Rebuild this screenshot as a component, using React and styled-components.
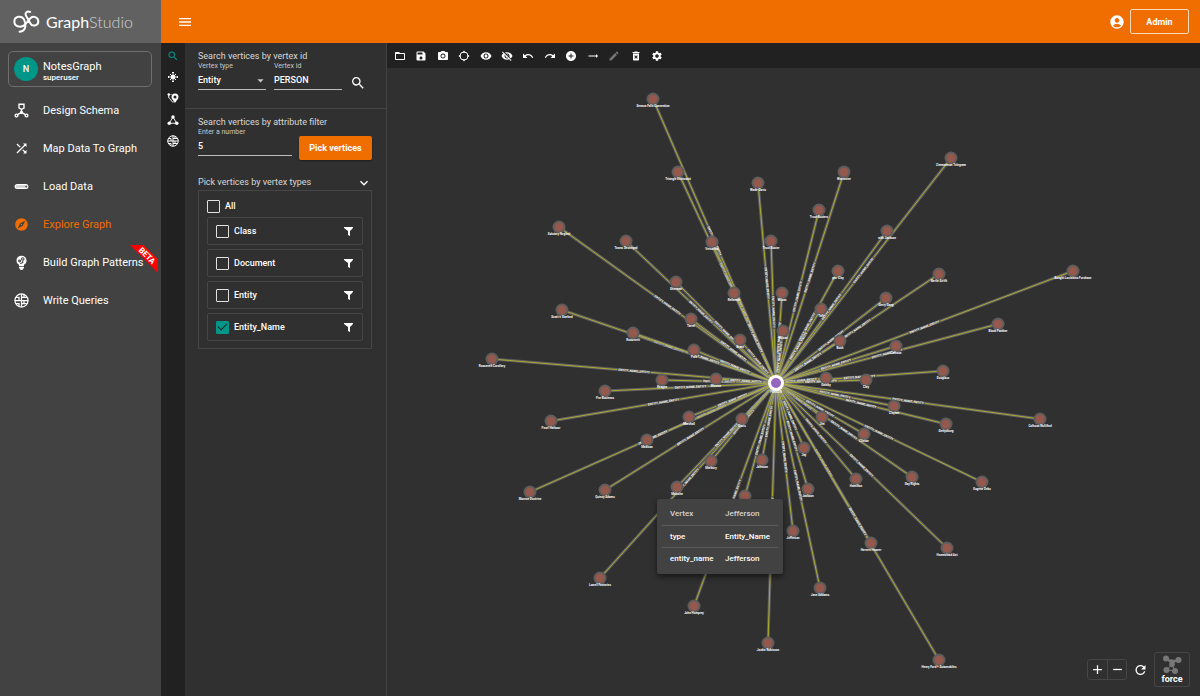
import React from 'react';
import styled, { createGlobalStyle, css } from 'styled-components';
import {
  MdMenu, MdAccountCircle, MdSearch, MdShuffle, MdExplore, MdFolderOpen, MdSave, MdPhotoCamera,
  MdVisibility, MdVisibilityOff, MdUndo, MdRedo, MdAddCircle, MdTrendingFlat, MdEdit,
  MdDeleteForever, MdSettings, MdExpandMore, MdAdd, MdRemove, MdRefresh, MdArrowDropDown,
} from 'react-icons/md';

const color = {
  orange: '#f06d00',
  teal: '#009688',
  panel: '#303030',
  bar: '#212121',
  side: '#424242',
  line: '#464646',
  soft: '#c8c8c8',
};

const GlobalStyle = createGlobalStyle`
  *, *::before, *::after { box-sizing: border-box; }
  body {
    margin: 0;
    background: ${color.panel};
    color: #fff;
    font-family: Roboto, "Liberation Sans", sans-serif;
    font-size: 9px;
    -webkit-font-smoothing: antialiased;
  }
  button, input, select { font: inherit; color: inherit; }
  h2 { margin: 0; }
`;

const plainButton = css`
  display: flex;
  align-items: center;
  justify-content: center;
  padding: 0;
  border: 0;
  background: none;
  cursor: pointer;
`;

const Shell = styled.div`
  display: grid;
  grid-template-columns: 161px minmax(0, 1fr);
  grid-template-rows: 43px minmax(0, 1fr);
  min-height: 100vh;
`;

const Brand = styled.div`
  display: flex;
  align-items: center;
  gap: 6px;
  padding-left: 13px;
  background: #616161;
`;

const BrandName = styled.span`
  font-family: Lato, "Liberation Sans", sans-serif;
  font-size: 16px;
  line-height: 20px;
`;

const BrandLight = styled.span`
  font-weight: 300;
  color: #d2d2d2;
`;

const Header = styled.header`
  display: flex;
  align-items: center;
  justify-content: space-between;
  padding: 0 11px 0 16px;
  background: ${color.orange};
`;

const HeaderButton = styled.button`
  ${plainButton}
  font-size: 16px;
`;

const Account = styled.div`
  display: flex;
  align-items: center;
  gap: 5px;
`;

const AdminButton = styled.button`
  ${plainButton}
  width: 59px;
  height: 25px;
  border: 1px solid #ffd9b8;
  border-radius: 2px;
  font-weight: 700;
`;

const Sidebar = styled.aside`
  padding: 8px 8px 0;
  background: ${color.side};
`;

const GraphCard = styled.button`
  ${plainButton}
  justify-content: flex-start;
  gap: 5px;
  width: 144px;
  height: 36px;
  padding-left: 5px;
  border: 1px solid #6e6e6e;
  border-radius: 5px;
  text-align: left;
`;

const Avatar = styled.span`
  display: flex;
  align-items: center;
  justify-content: center;
  width: 24px;
  height: 24px;
  border-radius: 50%;
  background: ${color.teal};
  font-size: 9px;
  font-weight: 500;
`;

const GraphTitles = styled.span`
  padding-top: 3px;
`;

const GraphName = styled.span`
  display: block;
  font-size: 11px;
  line-height: 13px;
  font-weight: 400;
`;

const GraphRole = styled.span`
  display: block;
  font-size: 8px;
  line-height: 9px;
  font-weight: 500;
`;

const Nav = styled.nav`
  display: flex;
  flex-direction: column;
  padding-top: 4px;
`;

const NavLink = styled.a`
  display: flex;
  align-items: center;
  gap: 14px;
  height: 38px;
  padding-left: 6px;
  position: relative;
  color: ${(p) => (p.$active ? color.orange : '#fff')};
  font-size: 11px;
  font-weight: 400;
  text-decoration: none;
  white-space: nowrap;

  svg { width: 15px; height: 15px; flex: none; }
`;

const Ribbon = styled.span`
  position: absolute;
  top: 2px;
  right: -5px;
  width: 28px;
  height: 28px;
  background: #f00;
  clip-path: polygon(0 0, 48% 0, 100% 52%, 100% 100%);
  display: flex;
  align-items: center;
  justify-content: center;
`;

const RibbonText = styled.span`
  font-size: 8px;
  line-height: 8px;
  font-weight: 700;
  padding-bottom: 8px;
  transform: rotate(45deg);
  color: #fff;
`;

const Workspace = styled.main`
  display: grid;
  grid-template-columns: 24px 202px minmax(0, 1fr);
`;

const ToolStrip = styled.div`
  padding-top: 2px;
  background: ${color.bar};
`;

const StripButtons = styled.div`
  display: grid;
  grid-template-rows: repeat(5, 1fr);
  height: 107px;
`;

const ToolButton = styled.button`
  ${plainButton}
  color: ${(p) => (p.$tone === 'active' ? color.teal : p.$tone === 'dim' ? '#757575' : '#fff')};

  svg { width: 12px; height: 12px; }
`;

const Panel = styled.section`
  background: ${color.panel};
  border-right: 1px solid #424242;
`;

const Section = styled.form`
  padding: 8px 14px 0 13px;
  height: ${(p) => p.$height}px;
  border-bottom: ${(p) => (p.$divided ? `1px solid ${color.line}` : '0')};
`;

const SectionTitle = styled.h2`
  font-size: 9px;
  line-height: 11px;
  font-weight: 400;
  color: #d8d8d8;
  white-space: nowrap;
`;

const Fields = styled.div`
  display: flex;
  align-items: flex-start;
  gap: ${(p) => p.$gap}px;
`;

const Field = styled.div`
  display: flex;
  flex-direction: column;
  flex: none;
  position: relative;
  width: ${(p) => p.$width}px;
`;

const FieldLabel = styled.label`
  font-size: 7px;
  line-height: 9px;
  color: ${color.soft};
`;

const control = css`
  width: 100%;
  height: 19px;
  padding: 0 0 1px;
  border: 0;
  border-bottom: 1px solid #bdbdbd;
  border-radius: 0;
  outline: 0;
  background: transparent;
  font-size: 9px;
  font-weight: 500;
  appearance: none;
`;

const TextInput = styled.input`${control}`;
const Select = styled.select`${control}`;

const SelectArrow = styled(MdArrowDropDown)`
  position: absolute;
  right: -2px;
  bottom: 2px;
  width: 15px;
  height: 15px;
  color: ${color.soft};
  pointer-events: none;
`;

const FindButton = styled.button`
  ${plainButton}
  flex: none;
  width: 16px;
  height: 42px;
  font-size: 16px;
`;

const PickButton = styled.button`
  ${plainButton}
  flex: none;
  width: 73px;
  height: 24px;
  margin-top: 8px;
  border-radius: 2px;
  background: ${color.orange};
  box-shadow: 0 1px 2px rgba(0, 0, 0, 0.4);
  font-weight: 700;
`;

const TypesHead = styled.div`
  display: flex;
  align-items: center;
  justify-content: space-between;
  height: 15px;
`;

const ChevronButton = styled.button`
  ${plainButton}
  font-size: 16px;
`;

const TypesBox = styled.div`
  display: flex;
  flex-direction: column;
  gap: 4px;
  padding: 8px 8px 7px;
  border: 1px solid ${color.line};
`;

const TypeRow = styled.div`
  display: flex;
  align-items: center;
  justify-content: space-between;
  height: ${(p) => (p.$framed ? 28 : 14)}px;
  padding: ${(p) => (p.$framed ? '0 8px' : '0')};
  border: ${(p) => (p.$framed ? `1px solid ${color.line}` : '0')};
  border-radius: 2px;
`;

const CheckLabel = styled.label`
  display: flex;
  align-items: center;
  gap: 5px;
  font-weight: 500;
`;

const Checkbox = styled.input`
  appearance: none;
  display: grid;
  place-content: center;
  width: 13px;
  height: 13px;
  margin: 0;
  border: 1px solid #e0e0e0;
  border-radius: 1px;

  &:checked {
    border-color: ${color.teal};
    background: ${color.teal};
  }
  &:checked::after {
    content: '';
    width: 9px;
    height: 5px;
    margin-bottom: 3px;
    border-left: 1px solid #222;
    border-bottom: 1px solid #222;
    transform: rotate(-45deg);
  }
`;

const FilterButton = styled.button`
  ${plainButton}
  width: 11px;
  height: 12px;
`;

const Stage = styled.section`
  display: flex;
  flex-direction: column;
`;

const Toolbar = styled.div`
  padding-left: 2px;
  background: ${color.bar};
`;

const ToolbarButtons = styled.div`
  display: grid;
  grid-template-columns: repeat(13, 1fr);
  width: 279px;
  height: 25px;
`;

const Canvas = styled.div`
  position: relative;
  flex: 1;
  min-height: 400px;
  background: ${color.panel};
`;

const GraphSvg = styled.svg`
  position: absolute;
  inset: 0;
  width: 100%;
  height: 100%;
`;

const NodeLabel = styled.text`
  font-size: 3px;
  font-weight: 700;
  fill: #fff;
  text-anchor: middle;
`;

const EdgeLabel = styled.text`
  font-size: 3px;
  font-weight: 700;
  fill: #fff;
  text-anchor: middle;
`;

const Tooltip = styled.div`
  position: absolute;
  left: 270px;
  top: 431px;
  width: 126px;
  height: 75px;
  padding: 4px 5px;
  background: #424242;
  border-radius: 2px;
  box-shadow: 0 3px 6px rgba(0, 0, 0, 0.5);
`;

const TipTable = styled.table`
  width: 100%;
  border-collapse: collapse;

  th, td {
    height: 22px;
    padding: 0 0 0 8px;
    font-size: 8px;
    font-weight: 500;
    text-align: left;
    white-space: nowrap;
  }
  th:first-child, td:first-child { width: 55px; }
  th { color: #d4d4d4; }
  tbody td { border-top: 1px solid #5a5a5a; }
`;

const ViewControls = styled.div`
  position: absolute;
  right: 10px;
  bottom: 9px;
  display: flex;
  align-items: center;
  gap: 6px;
`;

const ZoomGroup = styled.div`
  display: flex;
  border: 1px solid ${color.line};
  border-radius: 3px;
`;

const ZoomButton = styled.button`
  ${plainButton}
  width: 19px;
  height: 19px;
  font-size: 15px;

  & + & { border-left: 1px solid ${color.line}; }
`;

const ReloadButton = styled.button`
  ${plainButton}
  width: 15px;
  height: 20px;
  font-size: 16px;
`;

const LayoutButton = styled.button`
  ${plainButton}
  flex-direction: column;
  width: 36px;
  height: 35px;
  border: 1px solid ${color.line};
  border-radius: 3px;
  font-size: 9px;
  line-height: 11px;
  font-weight: 700;
`;

const BrandMark = () => (
  <svg width="27" height="23" viewBox="38 30 82 70" fill="none" stroke="#fff" strokeWidth="6" strokeLinecap="round" aria-hidden="true">
    <path d="M90 36C80 32 73 40 78 48L91 71C96 81 115 79 115 65C115 51 98 46 89 57L76 73C66 85 42 83 42 65C42 48 66 45 72 60C78 76 78 94 58 96" />
  </svg>
);

const SchemaIcon = () => (
  <svg viewBox="0 0 24 24" fill="none" stroke="currentColor" strokeWidth="2.2" aria-hidden="true">
    <path d="M8 2h8v6l-4 2-4-2z" />
    <path d="M12 10v5M12 15l-7 4M12 15l7 4" />
    <circle cx="4" cy="20" r="2.2" />
    <circle cx="20" cy="20" r="2.2" />
    <circle cx="12" cy="15" r="1.5" fill="currentColor" />
  </svg>
);

const LoadIcon = () => (
  <svg viewBox="0 0 24 24" aria-hidden="true">
    <rect x="1" y="8" width="22" height="8" rx="4" fill="#fff" />
    <rect x="3" y="10" width="15" height="4" rx="1" fill="#d0d0d0" />
    <circle cx="19.5" cy="12" r="1.8" fill="#555" />
  </svg>
);

const PatternIcon = () => (
  <svg viewBox="0 0 24 24" aria-hidden="true">
    <path fill="#fff" d="M12 1a8 8 0 0 0-8 8c0 3 1.600 5 4 6.500V18h8v-2.500c2.400-1.500 4-3.500 4-6.500a8 8 0 0 0-8-8zM8 19h8v2l-2 1v2h-4v-2l-2-1z" />
    <g fill="none" stroke="#424242" strokeWidth="1.700">
      <circle cx="14" cy="6.500" r="2" />
      <circle cx="9" cy="9.500" r="1.500" />
      <path d="M14 9v3l-4 2" />
    </g>
  </svg>
);

const QueryIcon = () => (
  <svg viewBox="0 0 24 24" fill="none" stroke="currentColor" strokeWidth="2" aria-hidden="true">
    <circle cx="12" cy="12" r="10.500" />
    <path d="M12 1.500v21M1.500 12h21M3 7h5v5M12 7h9M16 7V3M16 12v5h5M3 17h5v4M12 17h4" />
  </svg>
);

const ExpandIcon = () => (
  <svg viewBox="0 0 24 24" fill="none" stroke="currentColor" strokeWidth="2" aria-hidden="true">
    <circle cx="12" cy="12" r="3.500" fill="currentColor" />
    <path d="M12 3v18M3 12h18M6 6l12 12M18 6L6 18" />
    <path d="M10 3h4M10 21h4M3 10v4M21 10v4" />
  </svg>
);

const PathIcon = () => (
  <svg viewBox="0 0 24 24" aria-hidden="true">
    <path fill="currentColor" fillRule="evenodd" d="M16 3a7 7 0 0 1 7 7c0 4-4 7-7 12-3-5-7-8-7-12a7 7 0 0 1 7-7zm0 4a3 3 0 1 0 0 6 3 3 0 0 0 0-6z" />
    <circle cx="3.500" cy="5" r="2.500" fill="currentColor" />
    <path fill="none" stroke="currentColor" strokeWidth="2" d="M3.500 6v4c0 4 3 3 4 5s1 5 6 5M7 4l2 2" />
  </svg>
);

const TriangleIcon = () => (
  <svg viewBox="0 0 24 24" fill="currentColor" aria-hidden="true">
    <circle cx="12" cy="6" r="3.500" />
    <circle cx="4.500" cy="18.500" r="3.500" />
    <circle cx="19.500" cy="18.500" r="3.500" />
    <path fill="none" stroke="currentColor" strokeWidth="1.800" d="M12 6L4.500 18.500h15z" />
  </svg>
);

const TargetIcon = () => (
  <svg viewBox="0 0 24 24" fill="none" stroke="currentColor" strokeWidth="2" aria-hidden="true">
    <circle cx="12" cy="12" r="8" />
    <path fill="currentColor" stroke="none" d="M12 1l3 4H9zM12 23l3-4H9zM1 12l4-3v6zM23 12l-4-3v6z" />
  </svg>
);

const FunnelIcon = () => (
  <svg width="11" height="12" viewBox="0 0 11 12" aria-hidden="true">
    <path fill="#fff" d="M1 2h9v1L7 6v5L5 10V6L1 3z" />
  </svg>
);

const ForceIcon = () => (
  <svg width="20" height="19" viewBox="0 0 20 19" fill="#777" stroke="#777" aria-hidden="true">
    <path d="M4 4l6 5 6-4M10 9l-5 6M10 9l3 7M5 15l8 1" strokeWidth="1" />
    <g stroke="none">
      <circle cx="4" cy="3.500" r="3" />
      <circle cx="16.500" cy="5" r="3" />
      <circle cx="10" cy="9.500" r="2.800" />
      <circle cx="4.500" cy="15" r="3" />
      <circle cx="13" cy="16" r="3" />
    </g>
  </svg>
);

const navItems = [
  { label: 'Design Schema', Icon: SchemaIcon },
  { label: 'Map Data To Graph', Icon: MdShuffle },
  { label: 'Load Data', Icon: LoadIcon },
  { label: 'Explore Graph', Icon: MdExplore, active: true },
  { label: 'Build Graph Patterns', Icon: PatternIcon, beta: true },
  { label: 'Write Queries', Icon: QueryIcon },
];

const stripItems = [
  { label: 'Search vertices', Icon: MdSearch, tone: 'active' },
  { label: 'Expand', Icon: ExpandIcon },
  { label: 'Find paths', Icon: PathIcon },
  { label: 'Find connections', Icon: TriangleIcon },
  { label: 'Run queries', Icon: QueryIcon },
];

const toolbarItems = [
  { label: 'Open', Icon: MdFolderOpen },
  { label: 'Save', Icon: MdSave },
  { label: 'Screenshot', Icon: MdPhotoCamera },
  { label: 'Locate', Icon: TargetIcon },
  { label: 'Show', Icon: MdVisibility },
  { label: 'Hide', Icon: MdVisibilityOff },
  { label: 'Undo', Icon: MdUndo },
  { label: 'Redo', Icon: MdRedo },
  { label: 'Add vertex', Icon: MdAddCircle },
  { label: 'Add edge', Icon: MdTrendingFlat },
  { label: 'Edit', Icon: MdEdit, tone: 'dim' },
  { label: 'Delete', Icon: MdDeleteForever },
  { label: 'Settings', Icon: MdSettings },
];

const vertexTypes = [
  { name: 'Class' },
  { name: 'Document' },
  { name: 'Entity' },
  { name: 'Entity_Name', checked: true },
];

const hub = { x: 776, y: 383 };

const vertices = [
  [653, 99, 'Seneca Falls Convention'],
  [678, 172, 'Triangle Shirtwaist'],
  [758, 183, 'Wade-Davis'],
  [712, 242, 'Versailles'],
  [771, 241, 'Trust Buster'],
  [559, 227, 'Salutary Neglect'],
  [626, 241, 'Towns Destroyed'],
  [676, 282, 'Sherman'],
  [734, 293, 'Reformer'],
  [562, 310, 'Scott v. Sanford'],
  [633, 333, 'Roosevelt'],
  [691, 319, 'Tarrel'],
  [740, 340, 'Grant'],
  [694, 350, 'Polk'],
  [492, 359, 'Roosevelt Corollary'],
  [662, 380, 'Reagan'],
  [716, 379, 'Monroe'],
  [844, 172, 'Worcester'],
  [819, 210, 'Trust Busters'],
  [951, 158, 'Zimmerman Telegram'],
  [887, 231, 'with Jackson'],
  [838, 271, 'pro-Clay'],
  [782, 293, 'Wilson'],
  [783, 331, 'Wilson'],
  [821, 309, 'Taft'],
  [939, 274, 'Berlin Airlift'],
  [886, 298, 'Gerry Gang'],
  [840, 341, 'Bush'],
  [1073, 271, 'Bought Louisiana Purchase'],
  [998, 324, 'Black Panther'],
  [896, 346, 'Calhoun'],
  [943, 371, 'Douglass'],
  [826, 378, 'Gatsby'],
  [866, 380, 'Clay'],
  [605, 391, 'Pro-Business'],
  [551, 421, 'Pearl Harbour'],
  [689, 417, 'Marshall'],
  [742, 419, 'Davis'],
  [647, 440, 'Madison'],
  [711, 461, 'Marbury'],
  [762, 460, 'Johnson'],
  [530, 492, 'Monroe Doctrine'],
  [605, 490, 'Quincy Adams'],
  [677, 487, 'Malcolm'],
  [745, 496, 'Jefferson'],
  [600, 578, 'Lowell Factories'],
  [694, 606, 'John Humprey'],
  [768, 643, 'Jackie Robinson'],
  [793, 531, 'Jefferson'],
  [820, 588, 'Jane Addams'],
  [808, 489, 'Jackson'],
  [804, 448, 'Jay'],
  [822, 417, 'Jim'],
  [856, 479, 'Hamilton'],
  [864, 434, 'Clinton'],
  [912, 477, 'Gay Rights'],
  [982, 482, 'Eugene Debs'],
  [894, 406, 'Clayton'],
  [946, 424, 'Gettysburg'],
  [1040, 419, 'Calhoun Nullified'],
  [871, 543, 'Hervert Hoover'],
  [947, 548, 'Homestead Act'],
  [939, 660, 'Henry Ford + Automobiles'],
];

function Edge({ x, y }) {
  const dx = x - hub.x;
  const dy = y - hub.y;
  const angle = (Math.atan(dy / dx) * 180) / Math.PI;
  return (
    <g>
      <line x1={hub.x} y1={hub.y} x2={x} y2={y} stroke="#8a8a96" strokeOpacity="0.5" strokeWidth="3" />
      <line x1={hub.x} y1={hub.y} x2={x} y2={y} stroke="#bcbd22" strokeOpacity="0.8" strokeWidth="1" />
      <g transform={`translate(${hub.x + dx / 2} ${hub.y + dy / 2}) rotate(${angle})`}>
        <rect x="-17" y="-1" width="34" height="2" fill="#484848" fillOpacity="0.7" />
        <EdgeLabel y="1">ENTITY_NAME_ENTITY</EdgeLabel>
      </g>
    </g>
  );
}

function Graph() {
  return (
    <GraphSvg viewBox="387 68 813 628" role="img" aria-label="Vertices connected to PERSON">
      {vertices.map(([x, y], i) => <Edge key={i} x={x} y={y} />)}
      {vertices.map(([x, y, name], i) => (
        <g key={i}>
          <circle cx={x} cy={y} r="6.500" fill="#5d5d5d" />
          <circle cx={x} cy={y} r="4.500" fill="#94584c" />
          <NodeLabel x={x} y={y + 8}>{name}</NodeLabel>
        </g>
      ))}
      <circle cx={hub.x} cy={hub.y} r="8" fill="#fff" />
      <circle cx={hub.x} cy={hub.y} r="5" fill="#9467bd" />
      <NodeLabel x={hub.x} y={hub.y + 10}>PERSON</NodeLabel>
    </GraphSvg>
  );
}

export default function App() {
  return (
    <>
      <GlobalStyle />
      <Shell>
        <Brand>
          <BrandMark />
          <BrandName>Graph<BrandLight>Studio</BrandLight></BrandName>
        </Brand>
        <Header>
          <HeaderButton aria-label="Menu"><MdMenu /></HeaderButton>
          <Account>
            <HeaderButton aria-label="Account"><MdAccountCircle /></HeaderButton>
            <AdminButton>Admin</AdminButton>
          </Account>
        </Header>

        <Sidebar>
          <GraphCard>
            <Avatar>N</Avatar>
            <GraphTitles>
              <GraphName>NotesGraph</GraphName>
              <GraphRole>superuser</GraphRole>
            </GraphTitles>
          </GraphCard>
          <Nav>
            {navItems.map(({ label, Icon, active, beta }) => (
              <NavLink key={label} href="#" $active={active}>
                <Icon />
                {label}
                {beta && <Ribbon><RibbonText>BETA</RibbonText></Ribbon>}
              </NavLink>
            ))}
          </Nav>
        </Sidebar>

        <Workspace>
          <ToolStrip>
            <StripButtons>
              {stripItems.map(({ label, Icon, tone }) => (
                <ToolButton key={label} aria-label={label} $tone={tone}><Icon /></ToolButton>
              ))}
            </StripButtons>
          </ToolStrip>

          <Panel>
            <Section $height={66} $divided>
              <SectionTitle>Search vertices by vertex id</SectionTitle>
              <Fields $gap={8}>
                <Field $width={68}>
                  <FieldLabel htmlFor="vertex-type">Vertex type</FieldLabel>
                  <Select id="vertex-type" defaultValue="Entity">
                    <option>Entity</option>
                  </Select>
                  <SelectArrow />
                </Field>
                <Field $width={68}>
                  <FieldLabel htmlFor="vertex-id">Vertex id</FieldLabel>
                  <TextInput id="vertex-id" defaultValue="PERSON" />
                </Field>
                <FindButton type="button" aria-label="Search"><MdSearch /></FindButton>
              </Fields>
            </Section>
            <Section $height={58}>
              <SectionTitle>Search vertices by attribute filter</SectionTitle>
              <Fields $gap={7}>
                <Field $width={94}>
                  <FieldLabel htmlFor="vertex-count">Enter a number</FieldLabel>
                  <TextInput id="vertex-count" defaultValue="5" />
                </Field>
                <PickButton type="button">Pick vertices</PickButton>
              </Fields>
            </Section>
            <Section $height={180}>
              <TypesHead>
                <SectionTitle>Pick vertices by vertex types</SectionTitle>
                <ChevronButton type="button" aria-label="Collapse"><MdExpandMore /></ChevronButton>
              </TypesHead>
              <TypesBox>
                <TypeRow>
                  <CheckLabel><Checkbox type="checkbox" />All</CheckLabel>
                </TypeRow>
                {vertexTypes.map(({ name, checked }) => (
                  <TypeRow key={name} $framed>
                    <CheckLabel><Checkbox type="checkbox" defaultChecked={checked} />{name}</CheckLabel>
                    <FilterButton type="button" aria-label={`Filter ${name}`}><FunnelIcon /></FilterButton>
                  </TypeRow>
                ))}
              </TypesBox>
            </Section>
          </Panel>

          <Stage>
            <Toolbar>
              <ToolbarButtons>
                {toolbarItems.map(({ label, Icon, tone }) => (
                  <ToolButton key={label} aria-label={label} $tone={tone}><Icon /></ToolButton>
                ))}
              </ToolbarButtons>
            </Toolbar>
            <Canvas>
              <Graph />
              <Tooltip role="tooltip">
                <TipTable>
                  <thead>
                    <tr><th>Vertex</th><th>Jefferson</th></tr>
                  </thead>
                  <tbody>
                    <tr><td>type</td><td>Entity_Name</td></tr>
                    <tr><td>entity_name</td><td>Jefferson</td></tr>
                  </tbody>
                </TipTable>
              </Tooltip>
              <ViewControls>
                <ZoomGroup>
                  <ZoomButton aria-label="Zoom in"><MdAdd /></ZoomButton>
                  <ZoomButton aria-label="Zoom out"><MdRemove /></ZoomButton>
                </ZoomGroup>
                <ReloadButton aria-label="Refresh"><MdRefresh /></ReloadButton>
                <LayoutButton><ForceIcon />force</LayoutButton>
              </ViewControls>
            </Canvas>
          </Stage>
        </Workspace>
      </Shell>
    </>
  );
}
